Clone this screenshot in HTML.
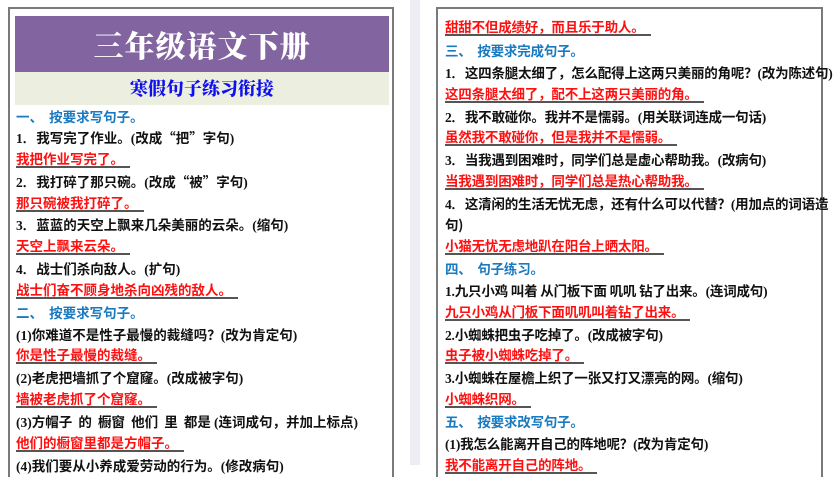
<!DOCTYPE html>
<html><head><meta charset="utf-8"><style>
*{margin:0;padding:0;box-sizing:border-box}
body{width:833px;height:465px;overflow:hidden;background:#fff;position:relative;font-family:"Liberation Serif","Noto Serif CJK SC","Noto Sans CJK SC",serif;font-weight:bold}
.strip{position:absolute;left:410px;top:0;width:10px;height:465px;background:#eceef4}
.page{position:absolute;top:7px;height:470px;border:2px solid #7a7a7a;border-bottom:none}
.l{left:8px;width:386px}
.r{left:436px;width:387px}
.h1{position:absolute;left:5px;top:7px;width:374px;height:56px;background:#8265a0;color:#fff;font-size:30px;font-weight:900;text-align:center;line-height:56px;font-family:"Noto Serif CJK SC",serif;letter-spacing:1px}
.h2{position:absolute;left:5px;top:63px;width:374px;height:33px;background:#ecefe0;color:#1010ee;font-size:18px;font-weight:900;text-align:center;line-height:33px;font-family:"Noto Serif CJK SC",serif}
.ln{position:absolute;font-size:13.5px;line-height:16px;white-space:nowrap;color:#111}
.b{color:#1a7ac0}
.a{color:#ff1010;font-family:"Noto Sans CJK SC",sans-serif;font-weight:bold;border-bottom:2px solid #555;padding-right:6px;line-height:15px}
.k{font-family:"Noto Sans CJK SC",sans-serif;font-weight:bold}
.r .ln,.rr{letter-spacing:-0.2px}
</style></head><body>
<div class="strip"></div>
<div class="page l">
<div class="h1">三年级语文下册</div>
<div class="h2">寒假句子练习衔接</div>
</div>
<div class="page r"></div>
<div class="ln b k" style="left:16px;top:108px">一、&nbsp;&nbsp;按要求写句子。</div>
<div class="ln" style="left:16px;top:129px">1．<span class="k">我写完了作业。</span>(<span class="k">改成“把”字句</span>)</div>
<div class="ln a" style="left:16px;top:151px">我把作业写完了。</div>
<div class="ln" style="left:16px;top:173px">2．<span class="k">我打碎了那只碗。</span>(<span class="k">改成“被”字句</span>)</div>
<div class="ln a" style="left:16px;top:195px">那只碗被我打碎了。</div>
<div class="ln" style="left:16px;top:216px">3．<span class="k">蓝蓝的天空上飘来几朵美丽的云朵。</span>(<span class="k">缩句</span>)</div>
<div class="ln a" style="left:16px;top:238px">天空上飘来云朵。</div>
<div class="ln" style="left:16px;top:260px">4．<span class="k">战士们杀向敌人。</span>(<span class="k">扩句</span>)</div>
<div class="ln a" style="left:16px;top:282px">战士们奋不顾身地杀向凶残的敌人。</div>
<div class="ln b k" style="left:16px;top:304px">二、&nbsp;&nbsp;按要求写句子。</div>
<div class="ln" style="left:16px;top:326px">(1)<span class="k">你难道不是性子最慢的裁缝吗？</span>(<span class="k">改为肯定句</span>)</div>
<div class="ln a" style="left:16px;top:347px">你是性子最慢的裁缝。</div>
<div class="ln" style="left:16px;top:369px">(2)<span class="k">老虎把墙抓了个窟窿。</span>(<span class="k">改成被字句</span>)</div>
<div class="ln a" style="left:16px;top:391px">墙被老虎抓了个窟窿。</div>
<div class="ln" style="left:16px;top:413px">(3)<span class="k">方帽子&nbsp; 的&nbsp; 橱窗&nbsp; 他们&nbsp; 里&nbsp; 都是 </span>(<span class="k">连词成句，并加上标点</span>)</div>
<div class="ln a" style="left:16px;top:435px">他们的橱窗里都是方帽子。</div>
<div class="ln" style="left:16px;top:457px">(4)<span class="k">我们要从小养成爱劳动的行为。</span>(<span class="k">修改病句</span>)</div>

<div class="ln a rr" style="left:445px;top:19px">甜甜不但成绩好，而且乐于助人。</div>
<div class="ln b k rr" style="left:445px;top:42px">三、&nbsp;&nbsp;按要求完成句子。</div>
<div class="ln rr" style="left:445px;top:64px">1．<span class="k">这四条腿太细了，怎么配得上这两只美丽的角呢？</span>(<span class="k">改为陈述句</span>)</div>
<div class="ln a rr" style="left:445px;top:86px">这四条腿太细了，配不上这两只美丽的角。</div>
<div class="ln rr" style="left:445px;top:108px">2．<span class="k">我不敢碰你。我并不是懦弱。</span>(<span class="k">用关联词连成一句话</span>)</div>
<div class="ln a rr" style="left:445px;top:129px">虽然我不敢碰你，但是我并不是懦弱。</div>
<div class="ln rr" style="left:445px;top:151px">3．<span class="k">当我遇到困难时，同学们总是虚心帮助我。</span>(<span class="k">改病句</span>)</div>
<div class="ln a rr" style="left:445px;top:173px">当我遇到困难时，同学们总是热心帮助我。</div>
<div class="ln rr" style="left:445px;top:195px">4．<span class="k">这清闲的生活无忧无虑，还有什么可以代替？</span>(<span class="k">用加点的词语造</span></div>
<div class="ln k rr" style="left:445px;top:216px">句)</div>
<div class="ln a rr" style="left:445px;top:238px">小猫无忧无虑地趴在阳台上晒太阳。</div>
<div class="ln b k rr" style="left:445px;top:260px">四、&nbsp;&nbsp;句子练习。</div>
<div class="ln rr" style="left:445px;top:282px">1.<span class="k">九只小鸡 叫着 从门板下面 叽叽 钻了出来。</span>(<span class="k">连词成句</span>)</div>
<div class="ln a rr" style="left:445px;top:304px">九只小鸡从门板下面叽叽叫着钻了出来。</div>
<div class="ln rr" style="left:445px;top:326px">2.<span class="k">小蜘蛛把虫子吃掉了。</span>(<span class="k">改成被字句</span>)</div>
<div class="ln a rr" style="left:445px;top:347px">虫子被小蜘蛛吃掉了。</div>
<div class="ln rr" style="left:445px;top:369px">3.<span class="k">小蜘蛛在屋檐上织了一张又打又漂亮的网。</span>(<span class="k">缩句</span>)</div>
<div class="ln a rr" style="left:445px;top:391px">小蜘蛛织网。</div>
<div class="ln b k rr" style="left:445px;top:413px">五、&nbsp;&nbsp;按要求改写句子。</div>
<div class="ln rr" style="left:445px;top:435px">(1)<span class="k">我怎么能离开自己的阵地呢？</span>(<span class="k">改为肯定句</span>)</div>
<div class="ln a rr" style="left:445px;top:457px">我不能离开自己的阵地。</div>
</body></html>
